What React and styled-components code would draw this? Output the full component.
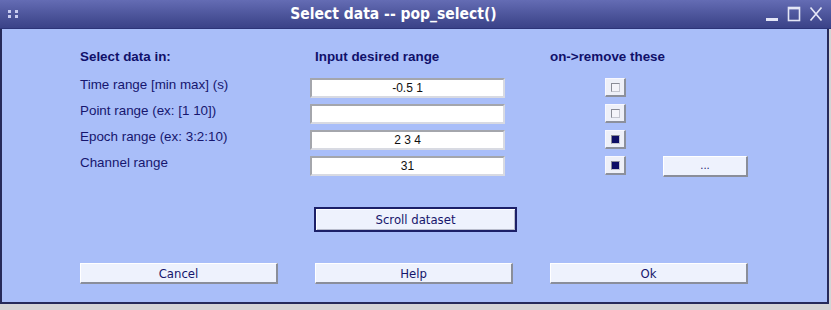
import React from 'react';
import styled, { createGlobalStyle } from 'styled-components';

const GlobalStyle = createGlobalStyle`
  html, body {
    margin: 0;
    padding: 0;
    background: #d4d4d6;
  }
  body {
    width: 831px;
    height: 310px;
    overflow: hidden;
    font-family: "Liberation Sans", Arial, sans-serif;
  }
`;

const Frame = styled.div`
  width: 831px;
  height: 310px;
  display: flex;
  flex-direction: column;
`;

const TitleBar = styled.div`
  height: 29px;
  flex: 0 0 29px;
  background: linear-gradient(#646cb4, #4a5298 60%, #3a4288);
  border-bottom: 1px solid #2c3478;
  display: flex;
  align-items: center;
  box-sizing: border-box;
`;

const Grip = styled.div`
  width: 10px;
  height: 8px;
  margin-left: 8px;
  display: grid;
  grid-template-columns: 3px 3px;
  grid-template-rows: 3px 3px;
  gap: 2px 4px;

  span {
    background: #c8ccf0;
  }
`;

const Title = styled.div`
  flex: 1;
  text-align: center;
  color: #ffffff;
  font-family: "DejaVu Sans Condensed", "Liberation Sans Narrow", "DejaVu Sans", sans-serif;
  font-stretch: condensed;
  font-weight: bold;
  font-size: 15.5px;
  padding-left: 4px;
`;

const Controls = styled.div`
  display: flex;
  align-items: center;
  gap: 8px;
  margin-right: 8px;
  height: 100%;
`;

const Body = styled.div`
  width: 829px;
  height: 275px;
  flex: 0 0 275px;
  box-sizing: border-box;
  background: #a9bef9;
  border-left: 2px solid #262a5a;
  border-right: 2px solid #262a5a;
  border-bottom: 2px solid #262a5a;
  padding: 21px 0 0 78px;
  display: flex;
  flex-direction: column;
  color: #14146c;
`;

const HeaderRow = styled.div`
  display: grid;
  grid-template-columns: 235px 235px auto;
  font-weight: bold;
  font-size: 13.4px;
  line-height: 14px;
  color: #10106a;
`;

const Rows = styled.div`
  margin-top: 14px;
  display: grid;
  grid-template-columns: 230px 195px 100px 22px 36px 85px;
  grid-auto-rows: 20px;
  row-gap: 6px;
`;

const Label = styled.div`
  grid-column: 1;
  font-size: 13.4px;
  line-height: 14px;
  color: #16166e;
  white-space: nowrap;
`;

const Field = styled.div`
  grid-column: 2;
  background: #ffffff;
  box-sizing: border-box;
  border: 2px solid #a4a6ac;
  border-right-color: #d8dae2;
  border-bottom-color: #d8dae2;
  font-size: 12px;
  line-height: 16px;
  text-align: center;
  color: #101010;
`;

const Check = styled.div`
  grid-column: 4;
  width: 21px;
  height: 19px;
  box-sizing: border-box;
  background: #eef0f8;
  border: 1px solid #f8f8ff;
  border-right: 2px solid #8c909c;
  border-bottom: 2px solid #8c909c;
  display: flex;
  align-items: center;
  justify-content: center;
`;

const CheckMark = styled.div`
  width: 9px;
  height: 9px;
  box-sizing: border-box;
  border: 1px solid #8a8c96;
  border-right-color: #c4c6d0;
  border-bottom-color: #c4c6d0;
  background: ${p => (p.$on ? '#0e0e66' : '#f4f4fa')};
`;

const Button = styled.div`
  box-sizing: border-box;
  background: #eef2fd;
  border: 1px solid #ffffff;
  border-right: 2px solid #8a8e9a;
  border-bottom: 2px solid #8a8e9a;
  font-family: "Liberation Sans Narrow", "DejaVu Sans Condensed", "Liberation Sans", sans-serif;
  font-size: 13px;
  color: #16166c;
  display: flex;
  align-items: center;
  justify-content: center;
  height: ${p => p.$h || 21}px;
  width: ${p => p.$w || 198}px;
`;

const DotsButton = styled(Button)`
  grid-column: 6;
  font-size: 11px;
  padding-bottom: 2px;
`;

const ScrollRow = styled.div`
  margin-top: 31px;
  padding-left: 234px;
  display: flex;
`;

const ScrollButton = styled(Button)`
  border: 2px solid #1c2068;
  box-shadow: inset 1px 1px #ffffff, inset -1px -1px #b8bccc;
`;

const ButtonRow = styled.div`
  margin-top: 31px;
  display: flex;
  gap: 37px;
`;

const rows = [
  { label: 'Time range [min max] (s)', value: '-0.5 1', on: false },
  { label: 'Point range (ex: [1 10])', value: '', on: false },
  { label: 'Epoch range (ex: 3:2:10)', value: '2 3 4', on: true },
  { label: 'Channel range', value: '31', on: true },
];

function WindowIcons() {
  return (
    <Controls>
      <svg width="14" height="16" viewBox="0 0 14 16">
        <rect x="1" y="12" width="12" height="3" fill="#e4e6f6" />
      </svg>
      <svg width="14" height="16" viewBox="0 0 14 16">
        <rect x="1.5" y="1.5" width="11" height="13" fill="none" stroke="#e4e6f6" strokeWidth="1.6" />
        <rect x="1" y="1" width="12" height="2.4" fill="#e4e6f6" />
      </svg>
      <svg width="14" height="16" viewBox="0 0 14 16">
        <path d="M1.5 1.5 L12.5 14.5 M12.5 1.5 L1.5 14.5" stroke="#e4e6f6" strokeWidth="1.7" />
      </svg>
    </Controls>
  );
}

export default function App() {
  return (
    <Frame>
      <GlobalStyle />
      <TitleBar>
        <Grip>
          <span />
          <span />
          <span />
          <span />
        </Grip>
        <Title>Select data -- pop_select()</Title>
        <WindowIcons />
      </TitleBar>
      <Body>
        <HeaderRow>
          <div>Select data in:</div>
          <div>Input desired range</div>
          <div>on-&gt;remove these</div>
        </HeaderRow>
        <Rows>
          {rows.map((r, i) => (
            <React.Fragment key={r.label}>
              <Label>{r.label}</Label>
              <Field>{r.value}</Field>
              <Check>
                <CheckMark $on={r.on} />
              </Check>
              {i === rows.length - 1 && <DotsButton $w={85} $h={21}>...</DotsButton>}
            </React.Fragment>
          ))}
        </Rows>
        <ScrollRow>
          <ScrollButton $w={203} $h={25}>Scroll dataset</ScrollButton>
        </ScrollRow>
        <ButtonRow>
          <Button>Cancel</Button>
          <Button>Help</Button>
          <Button>Ok</Button>
        </ButtonRow>
      </Body>
    </Frame>
  );
}
